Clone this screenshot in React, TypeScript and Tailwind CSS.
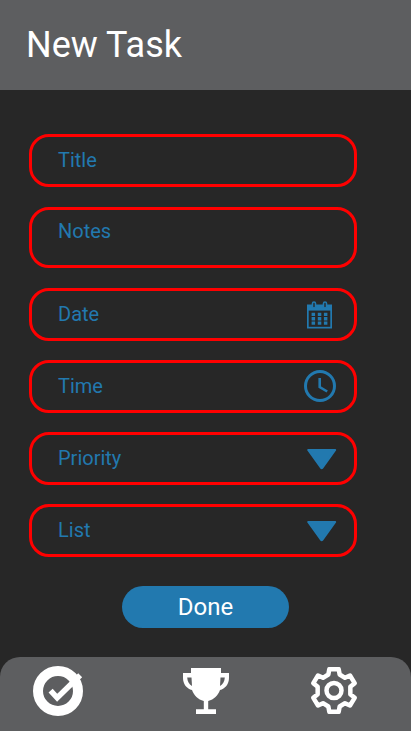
import React from "react";

function CalendarIcon() {
  return (
    <svg width="25" height="28" viewBox="0 0 25 28" fill="none">
      <path d="M0 3.500h25v24H0z" fill="#2279AF" />
      <path d="M1.700 9.600h21.600v16.200h-21.600z" fill="#272727" />
      <rect x="5.500" y="1" width="3" height="6" rx="1.500" fill="#272727" stroke="#2279AF" strokeWidth="1.600" />
      <rect x="16.500" y="1" width="3" height="6" rx="1.500" fill="#272727" stroke="#2279AF" strokeWidth="1.600" />
      <path
        d="M4.600 11.700h3.500v3.400h-3.500zM10.800 11.700h3.500v3.400h-3.500zM16.900 11.700h3.500v3.400h-3.500zM4.600 16h3.500v3.400h-3.500zM10.800 16h3.500v3.400h-3.500zM16.900 16h3.500v3.400h-3.500zM4.600 20.400h3.500v3.400h-3.500zM10.800 20.400h3.500v3.400h-3.500zM16.900 20.400h3.500v3.400h-3.500z"
        fill="#2279AF"
      />
    </svg>
  );
}

function ClockIcon() {
  return (
    <svg width="32" height="32" viewBox="0 0 32 32" fill="none" stroke="#2279AF">
      <circle cx="16" cy="16" r="14.500" strokeWidth="3" />
      <path d="M15.700 8v9l7.500 4.500" strokeWidth="2.600" />
    </svg>
  );
}

function ArrowIcon() {
  return (
    <svg width="30" height="22" viewBox="0 0 30 22">
      <path d="M1.200 2h27L15.300 19.800q-.6.800-1.200 0z" fill="#2279AF" stroke="#2279AF" strokeWidth="2" strokeLinejoin="round" />
    </svg>
  );
}

function CheckIcon() {
  return (
    <svg width="50" height="50" viewBox="0 0 50 50" fill="none">
      <circle cx="25" cy="25" r="20" stroke="#fff" strokeWidth="10" />
      <path d="M17.600 24.600L24.200 31.800L47.200 9.200" stroke="#fff" strokeWidth="5.600" />
    </svg>
  );
}

function TrophyIcon() {
  return (
    <svg width="46" height="46" viewBox="0 0 46 46" fill="#fff">
      <path d="M8 0h30v5h8v5c0 6-4 11-9 12-2 5.500-6 9.500-11.800 10.900V41.300H33V46H13v-4.700h7.800v-8.400C15 31.500 11 27.500 9 22 4 21 0 16 0 10V5h8zM4.200 9.500c.2 3.700 1.800 6.700 4.800 8.500l-.5-8.500zm37.600 0h-4.300l-.5 8.500c3-1.800 4.600-4.800 4.800-8.500z" fillRule="evenodd" />
    </svg>
  );
}

function GearIcon() {
  return (
    <svg width="46" height="47" viewBox="33 51.500 138 141" fill="none" stroke="#fff" strokeWidth="13.500" strokeLinejoin="round">
      <path d="M88 58H116L119 74L135 84L150 77L164 100L151 111V133L164 144L150 167L135 160L119 170L116 186H88L85 170L69 160L54 167L40 144L53 133V111L40 100L54 77L69 84L85 74Z" />
      <circle cx="102" cy="122" r="22.500" />
    </svg>
  );
}

function Field({ label, children }: { label: string; children?: React.ReactNode }) {
  return (
    <div className="flex h-[53px] items-center justify-between rounded-[20px] border-3 border-[#ff0000] pl-[26px]">
      <span className="pb-[2px] text-xl leading-6">{label}</span>
      {children}
    </div>
  );
}

export default function App() {
  return (
    <div className="flex h-[731px] w-[411px] flex-col overflow-hidden bg-[#272727] font-['Roboto',sans-serif] text-[#2279AF]">
      <header className="flex h-[90px] shrink-0 items-center bg-[#5d5e60] pl-[26px]">
        <h1 className="text-4xl leading-10 text-white">New Task</h1>
      </header>

      <main className="flex grow flex-col pt-11">
        <form className="ml-[29px] flex w-[328px] flex-col gap-[19px]">
          <Field label="Title" />
          <div className="mt-px mb-px h-[61px] rounded-[20px] border-3 border-[#ff0000] pt-[9px] pl-[26px]">
            <span className="block text-xl leading-6">Notes</span>
          </div>
          <Field label="Date">
            <span className="mr-[22px] pt-px"><CalendarIcon /></span>
          </Field>
          <Field label="Time">
            <span className="mr-[18px] pb-px"><ClockIcon /></span>
          </Field>
          <Field label="Priority">
            <span className="mr-[17px] pt-px"><ArrowIcon /></span>
          </Field>
          <Field label="List">
            <span className="mr-[17px] pt-px"><ArrowIcon /></span>
          </Field>
        </form>
        <button className="mt-[29px] ml-[122px] h-[42px] w-[167px] rounded-full bg-[#2279AF] text-2xl leading-7 text-white">
          Done
        </button>
      </main>

      <nav className="flex h-[74px] shrink-0 items-start justify-between rounded-t-[20px] bg-[#5d5e60] pt-[9px] pr-[54px] pl-[33px]">
        <CheckIcon />
        <span className="mt-[2px] ml-[18px]"><TrophyIcon /></span>
        <span className="mt-px"><GearIcon /></span>
      </nav>
    </div>
  );
}
